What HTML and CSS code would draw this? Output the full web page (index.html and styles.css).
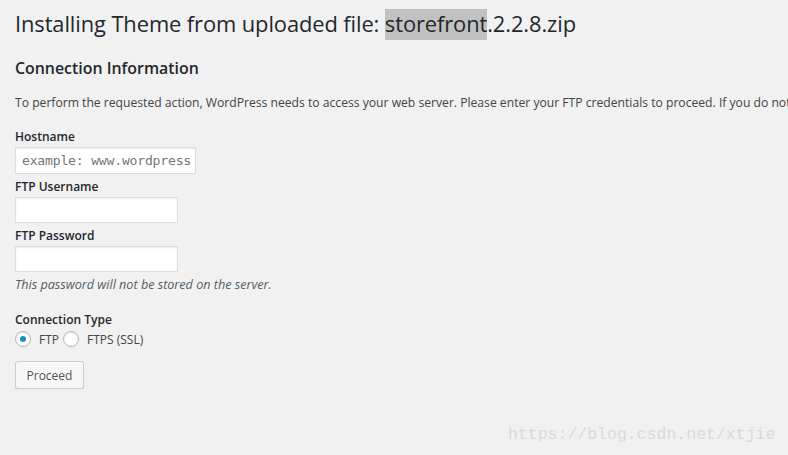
FILE: index.html
```html
<!DOCTYPE html>
<html>
<head>
<meta charset="utf-8">
<link rel="stylesheet" href="styles.css">
</head>
<body>
<div class="wrap">
  <h1 class="title">Installing Theme from uploaded file: <span class="sel">storefront</span>.2.2.8.zip</h1>
  <h2 class="subtitle">Connection Information</h2>
  <p class="intro">To perform the requested action, WordPress needs to access your web server. Please enter your FTP credentials to proceed. If you do not remember your credentials, you should contact your web host.</p>
  <div class="field first">
    <label class="label">Hostname</label>
    <div class="input input-host"><span class="ph">example: www.wordpress</span></div>
  </div>
  <div class="field">
    <label class="label">FTP Username</label>
    <div class="input"></div>
  </div>
  <div class="field">
    <label class="label">FTP Password</label>
    <div class="input"></div>
    <p class="desc">This password will not be stored on the server.</p>
  </div>
  <div class="field conn">
    <label class="label">Connection Type</label>
    <div class="radios">
      <span class="radio checked"></span><span class="rlabel">FTP</span>
      <span class="radio"></span><span class="rlabel">FTPS (SSL)</span>
    </div>
  </div>
  <button class="btn">Proceed</button>
</div>
<div class="watermark">https://blog.csdn.net/xtjie</div>
</body>
</html>
```
FILE: styles.css
```css
html, body {
  margin: 0;
  padding: 0;
  background: #f1f1f1;
  overflow: hidden;
  width: 788px;
  height: 455px;
}
body {
  font-family: "Open Sans", "Liberation Sans", sans-serif;
  color: #444;
  font-size: 12px;
  position: relative;
}
.wrap {
  padding: 9px 0 0 15px;
  white-space: nowrap;
  overflow: hidden;
}
.title {
  margin: 0;
  font-size: 21.9px;
  font-weight: 400;
  line-height: 30px;
  color: #23282d;
  letter-spacing: -0.1px;
}
.sel {
  background: #c1c1c1;
  padding: 0 0 2px;
}
.subtitle {
  margin: 18px 0 0;
  font-size: 15.9px;
  font-weight: 600;
  line-height: 22px;
  color: #23282d;
}
.intro {
  margin: 15px 0 0;
  font-size: 12.15px;
  line-height: 18px;
  color: #444;
  overflow: hidden;
}
.field {
  display: flex;
  flex-direction: column;
  align-items: flex-start;
}
.label {
  font-weight: 600;
  font-size: 12px;
  line-height: 18px;
  color: #23282d;
  margin-top: 4px;
}
.first .label { margin-top: 16px; }
.input {
  box-sizing: border-box;
  width: 163px;
  height: 26px;
  background: #fff;
  border: 1px solid #ddd;
  box-shadow: inset 0 1px 2px rgba(0,0,0,0.07);
  margin-top: 1px;
}
.input-host {
  width: 181px;
  height: 27px;
  display: flex;
  align-items: center;
  padding-left: 6px;
  overflow: hidden;
}
.ph {
  font-family: "DejaVu Sans Mono", "Liberation Mono", monospace;
  font-size: 13.1px;
  color: #72777c;
  letter-spacing: -0.2px;
}
.desc {
  margin: 4px 0 0;
  font-style: italic;
  font-size: 12.6px;
  line-height: 18px;
  color: #555d66;
}
.conn .label { margin-top: 17px; }
.radios {
  display: flex;
  align-items: center;
  margin-top: 0;
  height: 20px;
}
.radio {
  box-sizing: border-box;
  width: 16px;
  height: 16px;
  border-radius: 50%;
  border: 1px solid #b4b9be;
  background: #fff;
  box-shadow: inset 0 1px 2px rgba(0,0,0,0.1);
  display: flex;
  align-items: center;
  justify-content: center;
}
.radio.checked::after {
  content: "";
  width: 6px;
  height: 6px;
  border-radius: 50%;
  background: #1e8cbe;
}
.rlabel {
  margin-left: 8px;
  margin-right: 4px;
  font-size: 12px;
  color: #444;
}
.btn {
  margin-top: 12px;
  box-sizing: border-box;
  height: 28px;
  width: 69px;
  padding: 0;
  font-family: "Open Sans", "Liberation Sans", sans-serif;
  font-size: 12px;
  color: #555;
  background: #f7f7f7;
  border: 1px solid #ccc;
  border-radius: 3px;
  box-shadow: 0 1px 0 #ccc;
}
.watermark {
  position: absolute;
  left: 508px;
  top: 425px;
  font-family: "Liberation Mono", monospace;
  font-size: 16.5px;
  color: #dadada;
}
```
